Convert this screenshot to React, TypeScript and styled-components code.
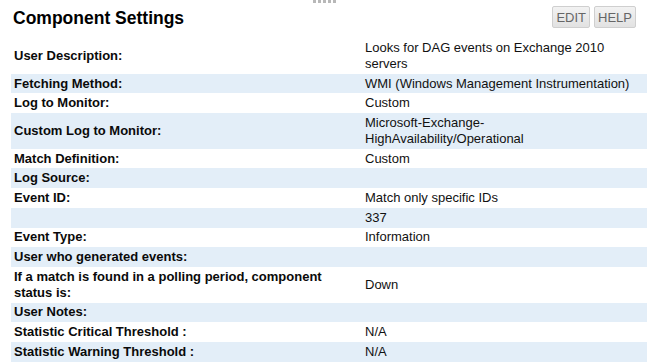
import styled, { createGlobalStyle } from 'styled-components';

const GlobalStyle = createGlobalStyle`
  html, body {
    margin: 0;
    padding: 0;
    background: #ffffff;
    font-family: Arial, "Liberation Sans", sans-serif;
  }
`;

const Panel = styled.div`
  position: relative;
  width: 647px;
  height: 363px;
  overflow: hidden;
  background: #fff;
`;

const Grip = styled.div`
  position: absolute;
  top: 0;
  left: 313px;
  display: flex;
  gap: 2px;
`;

const GripDot = styled.span`
  width: 3px;
  height: 3px;
  background: #b8b8b8;
`;

const Header = styled.div`
  display: flex;
  justify-content: space-between;
  align-items: flex-start;
  height: 38px;
  padding: 0 11px 0 13px;
`;

const Title = styled.h2`
  margin: 8px 0 0;
  font-size: 17.5px;
  line-height: 20px;
  font-weight: bold;
  color: #000;
`;

const Actions = styled.div`
  display: flex;
  gap: 4px;
  margin-top: 6px;
`;

const ActionButton = styled.button`
  height: 22px;
  padding: 0 3px;
  font-family: Arial, "Liberation Sans", sans-serif;
  font-size: 13px;
  color: #666;
  background: linear-gradient(#f2f2f2, #e2e2e2);
  border: 1px solid #cfcfcf;
  border-radius: 2px;
`;

const Table = styled.table`
  margin-left: 11px;
  width: 636px;
  border-collapse: collapse;
  font-size: 13px;
  line-height: 16px;
`;

const Row = styled.tr<{ $striped: boolean }>`
  background: ${(p) => (p.$striped ? '#e3eef8' : '#ffffff')};
`;

const Label = styled.td`
  width: 345px;
  padding: 1.85px 3px;
  font-weight: bold;
  color: #0a0a0a;
  vertical-align: middle;
`;

const Value = styled.td`
  padding: 1.85px 3px;
  color: #111;
  vertical-align: middle;
`;

const ValueText = styled.div`
  width: 272px;
`;

const rows: [string, string][] = [
  ['User Description:', 'Looks for DAG events on Exchange 2010 servers'],
  ['Fetching Method:', 'WMI (Windows Management Instrumentation)'],
  ['Log to Monitor:', 'Custom'],
  ['Custom Log to Monitor:', 'Microsoft-Exchange-HighAvailability/Operational'],
  ['Match Definition:', 'Custom'],
  ['Log Source:', ''],
  ['Event ID:', 'Match only specific IDs'],
  ['', '337'],
  ['Event Type:', 'Information'],
  ['User who generated events:', ''],
  ['If a match is found in a polling period, component status is:', 'Down'],
  ['User Notes:', ''],
  ['Statistic Critical Threshold :', 'N/A'],
  ['Statistic Warning Threshold :', 'N/A'],
];

const App = () => {
  return (
    <>
      <GlobalStyle />
      <Panel>
        <Grip>
          {[0, 1, 2, 3, 4].map((i) => (
            <GripDot key={i} />
          ))}
        </Grip>
        <Header>
          <Title>Component Settings</Title>
          <Actions>
            <ActionButton>EDIT</ActionButton>
            <ActionButton>HELP</ActionButton>
          </Actions>
        </Header>
        <Table>
          <tbody>
            {rows.map(([label, value], index) => (
              <Row key={index} $striped={index % 2 === 1}>
                <Label>{label}</Label>
                <Value>
                  <ValueText>{value}</ValueText>
                </Value>
              </Row>
            ))}
          </tbody>
        </Table>
      </Panel>
    </>
  );
};

export default App;
